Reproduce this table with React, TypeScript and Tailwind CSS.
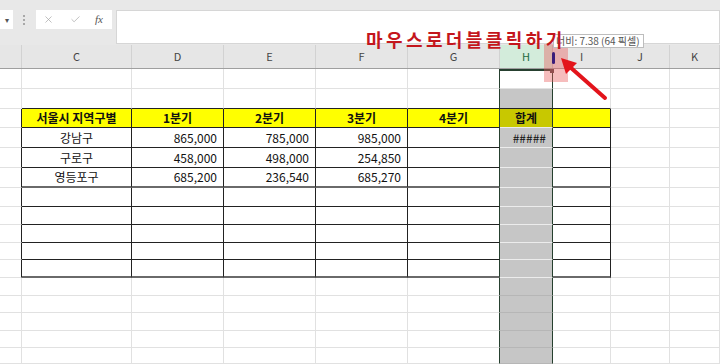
import { X, Check } from 'lucide-react'

const cols = ['', 'C', 'D', 'E', 'F', 'G', 'H', 'I', 'J', 'K']

// body row heights, top to bottom
const rowH = [
  'h-[20px]', 'h-[20px]', 'h-[19px]', 'h-[20px]', 'h-[20px]', 'h-[20px]', 'h-[19px]', 'h-[18px]',
  'h-[18px]', 'h-[17px]', 'h-[18px]', 'h-[18px]', 'h-[17px]', 'h-[18px]', 'h-[17px]', 'h-[16px]',
]

const data: Record<number, string[]> = {
  2: ['', '서울시 지역구별', '1분기', '2분기', '3분기', '4분기', '합계', '', '', ''],
  3: ['', '강남구', '865,000', '785,000', '985,000', '', '#####', '', '', ''],
  4: ['', '구로구', '458,000', '498,000', '254,850', '', '', '', '', ''],
  5: ['', '영등포구', '685,200', '236,540', '685,270', '', '', '', '', ''],
}

const grid = 'grid grid-cols-[22px_110px_92px_92px_92px_92px_53px_58px_59px_50px]'

function cellClass(r: number, c: number) {
  const inTable = r >= 2 && r <= 10 && c >= 1 && c <= 7
  const cls = ['flex items-center overflow-hidden whitespace-nowrap text-[12px] text-[#111]']

  // background
  if (c === 6 && r >= 1) cls.push(r === 2 ? 'bg-[#c8c800]' : 'bg-[#c6c6c6]')
  else if (r === 2 && inTable) cls.push('bg-[#ffff00]')
  else cls.push('bg-white')

  // right border
  if (c === 5 || c === 6) cls.push('border-r border-r-[#26402f]')
  else if (inTable || (c === 0 && r >= 2 && r <= 10)) cls.push('border-r border-r-[#222]')
  else cls.push('border-r border-r-[#e1e1e1]')

  // bottom border
  if (c === 6 && r >= 2 && r <= 10) cls.push('border-b border-b-[#ececec]')
  else if (inTable) cls.push(r === 5 || r === 10 ? 'border-b-2 border-b-[#6a6a6a]' : 'border-b border-b-[#222]')
  else if (r === 1 && c >= 1 && c <= 7) cls.push('border-b border-b-[#222]')
  else if (c === 6 && r >= 1) cls.push('border-b border-b-[#b6b6b6]')
  else cls.push('border-b border-b-[#e1e1e1]')

  // alignment
  if (r === 2) cls.push('justify-center font-bold')
  else if (c === 1) cls.push('justify-center')
  else cls.push('justify-end pr-[6px]')
  return cls.join(' ')
}

export default function App() {
  return (
    <div className="relative h-[364px] w-[720px] overflow-hidden bg-white font-['Noto_Sans_CJK_KR','Noto_Sans',sans-serif]">
      {/* Formula bar */}
      <div className="flex h-[45px] items-start bg-[#e8e8e8] pt-[10px]">
        <div className="flex h-[19px] w-[13px] items-center justify-center bg-white text-[8px] text-[#555]">▾</div>
        <div className="ml-[10px] mt-[5px] flex flex-col gap-[2px]">
          <span className="h-[2px] w-[2px] bg-[#a8a8a8]" />
          <span className="h-[2px] w-[2px] bg-[#a8a8a8]" />
          <span className="h-[2px] w-[2px] bg-[#a8a8a8]" />
        </div>
        <div className="ml-[11px] flex h-[19px] w-[76px] items-center bg-white">
          <X className="ml-[7px] h-[11px] w-[11px] text-[#a4a4a4]" strokeWidth={1.5} />
          <Check className="ml-[16px] h-[11px] w-[11px] text-[#a4a4a4]" strokeWidth={1.5} />
          <span className="ml-[14px] font-['Liberation_Serif',serif] text-[11px] italic leading-none text-[#555]">fx</span>
        </div>
        <div className="ml-[4px] h-[34px] flex-1 border border-[#d6d6d6] bg-white" />
      </div>

      {/* Column headers */}
      <div className={`${grid} h-[24px] border-b border-b-[#9f9f9f] bg-[#e6e6e6]`}>
        {cols.map((h, c) => (
          <div
            key={c}
            className={
              c === 6
                ? 'flex items-center justify-center border-r border-r-[#c9c9c9] bg-[#d3ecdb] text-[11px] text-[#1d6b40]'
                : 'flex items-center justify-center border-r border-r-[#d2d2d2] text-[11px] text-[#444]'
            }
          >
            {h}
          </div>
        ))}
      </div>

      {/* Cells */}
      {rowH.map((h, r) => (
        <div key={r} className={`${grid} ${h}`}>
          {cols.map((_, c) => (
            <div key={c} className={cellClass(r, c)}>
              {data[r]?.[c] ?? ''}
            </div>
          ))}
        </div>
      ))}

      {/* active cell top edge + fill handle */}
      <div className="absolute left-[500px] top-[69px] h-[2px] w-[53px] bg-[#26402f]" />
      <div className="absolute left-[550px] top-[69px] h-[4px] w-[4px] bg-[#5a4646]" />

      {/* column resize highlight */}
      <div className="absolute left-[544px] top-[44px] h-[38px] w-[24px] bg-[#e85a5a]/40" />
      <div className="absolute left-[552px] top-[52px] h-[12px] w-[3px] rounded-sm bg-[#3b1c7a]" />

      {/* width tooltip */}
      <div className="absolute left-[553px] top-[34px] flex h-[14px] items-center border border-[#bdbdbd] bg-white pl-[2px] pr-[3px] text-[10px] leading-none text-[#555]">
        너비: 7.38 (64 픽셀)
      </div>

      {/* annotation */}
      <div className="absolute left-[366px] top-[30px] text-[18px] font-bold leading-none tracking-[3.4px] text-[#c4161c]">
        마우스로더블클릭하기
      </div>

      <svg className="pointer-events-none absolute left-0 top-0" width="720" height="364" viewBox="0 0 720 364">
        <line x1="605" y1="98" x2="570" y2="67" stroke="#e3141b" strokeWidth="4" strokeLinecap="round" />
        <polygon points="561,58 577,63 566,74" fill="#e3141b" />
      </svg>
    </div>
  )
}
